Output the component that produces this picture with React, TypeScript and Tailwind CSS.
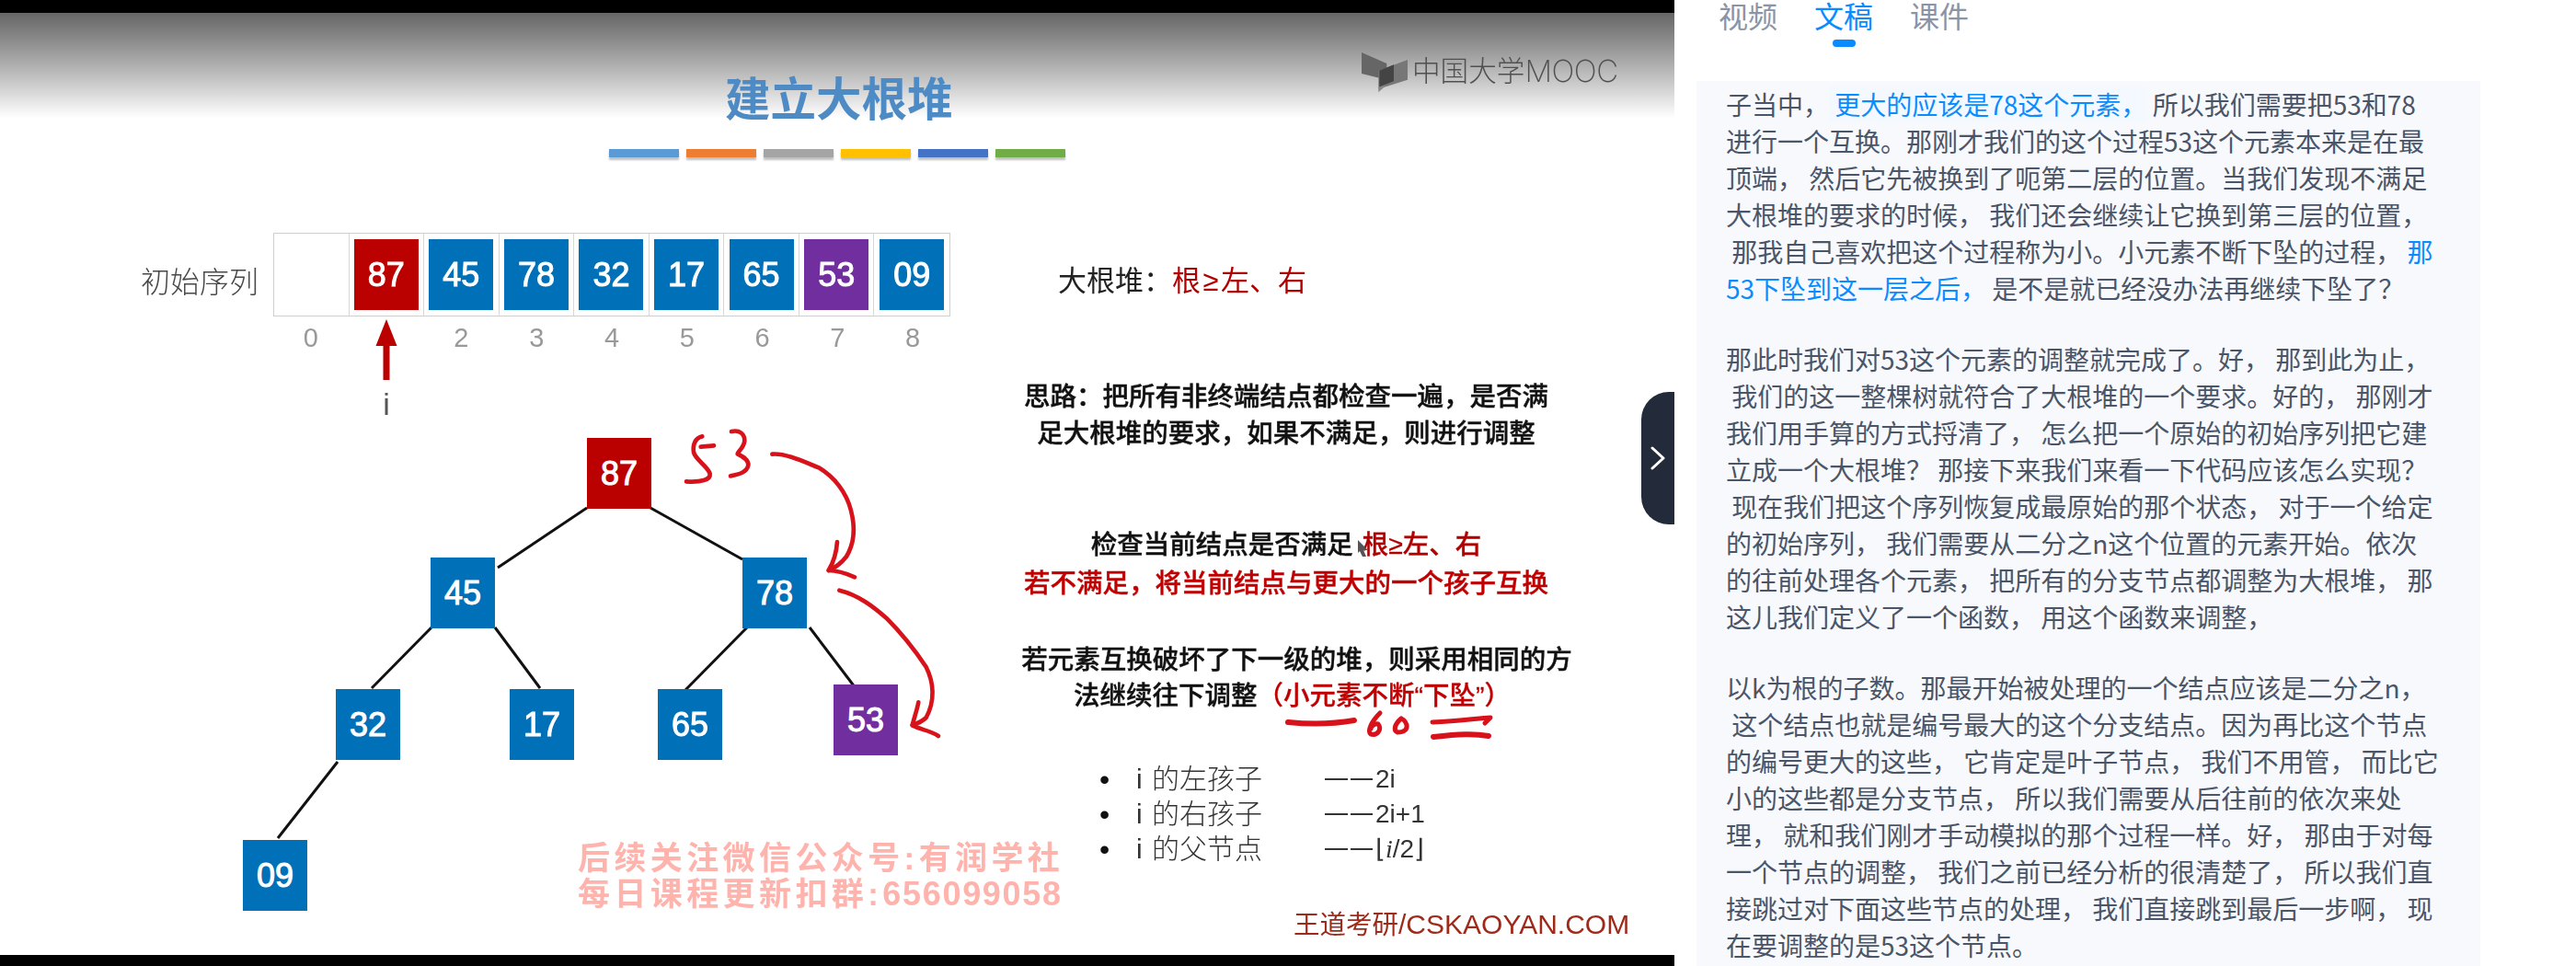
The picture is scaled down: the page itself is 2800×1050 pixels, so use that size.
import React from 'react';

const cells = [
  { value: '', color: '', index: '0' },
  { value: '87', color: 'bg-[#bb0000]', index: '' },
  { value: '45', color: 'bg-[#0070b8]', index: '2' },
  { value: '78', color: 'bg-[#0070b8]', index: '3' },
  { value: '32', color: 'bg-[#0070b8]', index: '4' },
  { value: '17', color: 'bg-[#0070b8]', index: '5' },
  { value: '65', color: 'bg-[#0070b8]', index: '6' },
  { value: '53', color: 'bg-[#702e9e]', index: '7' },
  { value: '09', color: 'bg-[#0070b8]', index: '8' },
];

const nodes = [
  { value: '87', className: 'left-[638px] top-[476px] bg-[#bb0000]' },
  { value: '45', className: 'left-[468px] top-[606px] bg-[#0070b8]' },
  { value: '78', className: 'left-[807px] top-[606px] bg-[#0070b8]' },
  { value: '32', className: 'left-[365px] top-[749px] bg-[#0070b8]' },
  { value: '17', className: 'left-[554px] top-[749px] bg-[#0070b8]' },
  { value: '65', className: 'left-[715px] top-[749px] bg-[#0070b8]' },
  { value: '53', className: 'left-[906px] top-[744px] bg-[#702e9e]' },
  { value: '09', className: 'left-[264px] top-[913px] bg-[#0070b8]' },
];

const edges = [
  [638, 552, 541, 617],
  [707, 552, 807, 608],
  [469, 682, 404, 748],
  [538, 682, 587, 748],
  [812, 682, 745, 750],
  [880, 682, 930, 748],
  [367, 828, 302, 911],
];

const bars = ['bg-[#5b9bd5]', 'bg-[#ed7d31]', 'bg-[#a5a5a5]', 'bg-[#ffc000]', 'bg-[#4472c4]', 'bg-[#70ad47]'];

const paragraphs = [
  [
    <>子当中，<span className="bg-[#f3f9fe] text-[#0a8cff]"> 更大的应该是78这个元素，</span> 所以我们需要把53和78</>,
    '进行一个互换。那刚才我们的这个过程53这个元素本来是在最',
    '顶端， 然后它先被换到了呃第二层的位置。当我们发现不满足',
    '大根堆的要求的时候， 我们还会继续让它换到第三层的位置，',
    <> 那我自己喜欢把这个过程称为小。小元素不断下坠的过程， <span className="text-[#0a8cff]">那</span></>,
    <><span className="text-[#0a8cff]">53下坠到这一层之后，</span> 是不是就已经没办法再继续下坠了？</>,
  ],
  [
    '那此时我们对53这个元素的调整就完成了。好， 那到此为止，',
    ' 我们的这一整棵树就符合了大根堆的一个要求。好的， 那刚才',
    '我们用手算的方式捋清了， 怎么把一个原始的初始序列把它建',
    '立成一个大根堆？ 那接下来我们来看一下代码应该怎么实现？',
    ' 现在我们把这个序列恢复成最原始的那个状态， 对于一个给定',
    '的初始序列， 我们需要从二分之n这个位置的元素开始。依次',
    '的往前处理各个元素， 把所有的分支节点都调整为大根堆， 那',
    '这儿我们定义了一个函数， 用这个函数来调整，',
  ],
  [
    '以k为根的子数。那最开始被处理的一个结点应该是二分之n，',
    ' 这个结点也就是编号最大的这个分支结点。因为再比这个节点',
    '的编号更大的这些， 它肯定是叶子节点， 我们不用管， 而比它',
    '小的这些都是分支节点， 所以我们需要从后往前的依次来处',
    '理， 就和我们刚才手动模拟的那个过程一样。好， 那由于对每',
    '一个节点的调整， 我们之前已经分析的很清楚了， 所以我们直',
    '接跳过对下面这些节点的处理， 我们直接跳到最后一步啊， 现',
    '在要调整的是53这个节点。',
  ],
];

const childRows = [
  { label: '的左孩子', formula: <>2i</> },
  { label: '的右孩子', formula: <>2i+1</> },
  { label: '的父节点', formula: <>⌊<em className="font-['Liberation_Serif',serif]">i</em>/2⌋</> },
];

function Slide() {
  return (
    <div className="absolute inset-0 blur-[0.5px] font-['Liberation_Sans','Noto_Sans_CJK_SC',sans-serif]">
      <div className="absolute left-[788px] top-[79px] text-[49.5px] leading-[60px] font-bold text-[#4e8bc4]">建立大根堆</div>

      <div className="absolute left-[662px] top-[162px] flex gap-[8px]">
        {bars.map((bar, i) => (
          <div key={i} className={`h-[9px] w-[76px] shadow-[0_3px_2px_rgba(0,0,0,0.25)] ${bar}`} />
        ))}
      </div>

      {/* logo */}
      <svg className="absolute left-[1470px] top-[45px]" width="65" height="60" viewBox="0 0 195 180">
        <polygon points="30,36 112,72 112,125 30,105" fill="#666" />
        <polygon points="85,95 180,60 180,125 85,155" fill="#777" />
        <polygon points="88,95 135,76 135,130 88,148" fill="#444" />
        <polygon points="85,150 110,143 85,166" fill="#888" />
      </svg>
      <div className="absolute left-[1535px] top-[58px] flex h-[40px] items-center text-[30.6px] font-light text-[#505050]">
        中国大学<span className="font-['Inter',sans-serif] text-[33px] font-extralight tracking-[-0.5px]">MOOC</span>
      </div>

      {/* sequence */}
      <div className="absolute left-[153px] top-[284px] text-[32px] leading-[46px] font-light text-[#484848]">初始序列</div>
      <div className="absolute left-[297px] top-[253px] w-[736px]">
        <div className="grid h-[91px] grid-cols-9 border border-[#cfcfcf]">
          {cells.map((cell, i) => (
            <div key={i} className="flex items-center justify-center border-r border-[#d8d8d8] last:border-r-0">
              {cell.value && (
                <div className={`flex h-[77px] w-[70px] items-center justify-center text-[36px] text-white [-webkit-text-stroke:1px_white] ${cell.color}`}>
                  {cell.value}
                </div>
              )}
            </div>
          ))}
        </div>
        <div className="mt-[5px] grid grid-cols-9 text-center text-[29px] leading-[36px] text-[#999]">
          {cells.map((cell, i) => (
            <div key={i}>{cell.index}</div>
          ))}
        </div>
      </div>
      <svg className="absolute left-[400px] top-[340px]" width="40" height="80" viewBox="0 0 40 80">
        <polygon points="20,7 31.5,36 23.5,36 23.5,73 16.5,73 16.5,36 8.5,36" fill="#bb0000" />
      </svg>
      <div className="absolute left-[400px] top-[420px] w-[40px] text-center text-[34px] leading-[38px] text-[#555]">i</div>

      {/* tree */}
      <svg className="absolute left-0 top-0" width="1820" height="1050">
        {edges.map(([x1, y1, x2, y2], i) => (
          <line key={i} x1={x1} y1={y1} x2={x2} y2={y2} stroke="#111" strokeWidth="3" />
        ))}
      </svg>
      {nodes.map((node) => (
        <div
          key={node.value}
          className={`absolute flex h-[77px] w-[70px] items-center justify-center text-[36px] text-white [-webkit-text-stroke:1px_white] ${node.className}`}
        >
          {node.value}
        </div>
      ))}

      {/* handwriting on the tree */}
      <svg className="absolute left-[730px] top-[455px]" width="300" height="360" viewBox="0 0 900 1080" fill="none" stroke="#d8121a" strokeWidth="14" strokeLinecap="round" strokeLinejoin="round">
        <path d="M100 58 C78 62 68 85 72 110 C78 135 118 155 125 180 C128 200 95 208 48 205" />
        <path d="M95 92 L138 88" />
        <path d="M195 42 C222 36 238 50 238 72 C236 95 218 105 215 115 C235 125 252 135 250 152 C246 175 220 182 192 187" />
        <path d="M328 116 C370 112 430 140 480 160 C530 190 570 240 585 300 C598 350 600 400 570 450 C550 475 530 488 512 495" />
        <path d="M540 402 C538 430 530 465 512 495 C540 495 570 505 597 517" />
        <path d="M547 560 C610 575 660 615 700 650 C745 695 790 750 830 810 C855 860 860 920 830 975 C815 990 800 995 785 1000" />
        <path d="M805 925 C800 950 790 980 785 1000 C810 1015 840 1015 870 1035" />
      </svg>

      {/* right column */}
      <div className="absolute left-[1150px] top-[284px] text-[31px] leading-[44px] text-[#222]">
        大根堆：<span className="text-[#b00000]">根<span className="px-[2.5px]">≥</span>左、右</span>
      </div>

      <div className="absolute left-[1048px] top-[411px] w-[700px] text-center text-[28.5px] leading-[40px] font-medium text-[#111] [-webkit-text-stroke:0.4px_#111]">
        <div>思路：把所有非终端结点都检查一遍，是否满</div>
        <div>足大根堆的要求，如果不满足，则进行调整</div>
      </div>

      <div className="absolute left-[1048px] top-[571px] w-[700px] text-center text-[28.5px] leading-[42px] font-medium text-[#111] [-webkit-text-stroke:0.4px_#111]">
        <div>检查当前结点是否满足<span className="ml-[10px] text-[#b00000] [-webkit-text-stroke:0.3px_#b00000]">根≥左、右</span></div>
        <div className="text-[#c00000] [-webkit-text-stroke:0.4px_#c00000]">若不满足，将当前结点与更大的一个孩子互换</div>
      </div>

      <div className="absolute left-[1048px] top-[698px] w-[723px] text-center text-[28.5px] leading-[39px] font-medium text-[#111] [-webkit-text-stroke:0.4px_#111]">
        <div>若元素互换破坏了下一级的堆，则采用相同的方</div>
        <div className="pr-[10px]">法继续往下调整<span className="text-[#c00000] [-webkit-text-stroke:0.3px_#c00000]">（小元素不断“下坠”）</span></div>
      </div>

      {/* cursor + underline strokes */}
      <svg className="absolute left-[1380px] top-[580px]" width="270" height="240" viewBox="0 0 270 240">
        <polygon points="96,7 107,18 102,18 105,25 101,25 98,19 96,21" fill="#555" />
        <g fill="none" stroke="#d8121a" strokeWidth="5" strokeLinecap="round" strokeLinejoin="round">
          <path d="M20 205 C50 208 75 206 92 203" strokeWidth="6" />
          <path d="M120 195 C110 205 106 215 110 218 C118 220 122 212 118 207 C114 206 110 210 110 212" />
          <path d="M143 201 C136 207 134 214 139 216 C146 216 150 213 149 208 C148 205 146 202 143 201" />
          <path d="M177 205 C205 204 225 201 240 200 L234 206" />
          <path d="M178 221 C205 218 222 217 238 220" strokeWidth="6" />
        </g>
      </svg>

      {/* child index formulas */}
      <div className="absolute left-[1195px] top-[828px] text-[#333]">
        {childRows.map((row) => (
          <div key={row.label} className="flex h-[38px] items-center leading-[38px]">
            <div className="w-[40px] text-[32px] text-[#111]">•</div>
            <div className="flex w-[205px] items-center text-[30px] font-light">
              <span className="w-[17px]">i</span>
              {row.label}
            </div>
            <div className="flex items-center text-[28px]">
              <div className="mr-[3px] flex w-[52px] gap-[3px]">
                <div className="h-[2px] w-[25px] bg-[#333]" />
                <div className="h-[2px] w-[24px] bg-[#333]" />
              </div>
              {row.formula}
            </div>
          </div>
        ))}
      </div>

      {/* watermark + credit */}
      <div className="absolute left-[628px] top-[913px] text-[35px] leading-[39px] font-bold tracking-[4.4px] text-[#ffb3ad]">
        <div>后续关注微信公众号:有润学社</div>
        <div>每日课程更新扣群:<span className="text-[36px] tracking-[1.7px]">656099058</span></div>
      </div>
      <div className="absolute left-[1406px] top-[985px] text-[28.5px] leading-[40px] text-[#a02a1a]">
        王道考研<span className="text-[30px]">/CSKAOYAN.COM</span>
      </div>
    </div>
  );
}

export default function App() {
  return (
    <div className="flex h-[1050px] w-[2800px] overflow-hidden bg-white font-['Noto_Sans_CJK_SC',sans-serif]">
      <section className="relative flex h-full w-[1820px] flex-col bg-white">
        <div className="h-[14px] bg-black" />
        <div className="h-[114px] bg-gradient-to-b from-[#666666] to-white" />
        <div className="flex-1" />
        <div className="h-[12px] bg-black" />
        <Slide />
        <button className="absolute right-0 top-[426px] flex h-[144px] w-[36px] items-center justify-center rounded-l-[30px] bg-[#232a3a]">
          <svg width="16" height="26" viewBox="0 0 16 26" fill="none" stroke="white" strokeWidth="3" strokeLinecap="round" strokeLinejoin="round">
            <path d="M2 2 L14 13 L2 24" />
          </svg>
        </button>
      </section>

      <aside className="flex h-full w-[980px] flex-col">
        <nav className="flex h-[88px] shrink-0 gap-[40px] pl-12 text-[32px] leading-8 text-[#8a94a6]">
          <div>视频</div>
          <div className="flex flex-col items-center text-[#0a8cff]">
            文稿
            <div className="mt-[11px] h-2 w-[25px] rounded-full bg-[#0a8cff]" />
          </div>
          <div>课件</div>
        </nav>
        <div className="ml-6 w-[852px] flex-1 overflow-hidden bg-[#f8f9fd] px-8 pt-[5px] text-[28px] leading-10 text-[#4a5568]">
          {paragraphs.map((lines, p) => (
            <div key={p} className="mb-[37px]">
              {lines.map((line, i) => (
                <div key={i} className="h-10 whitespace-pre">{line}</div>
              ))}
            </div>
          ))}
        </div>
      </aside>
    </div>
  );
}
